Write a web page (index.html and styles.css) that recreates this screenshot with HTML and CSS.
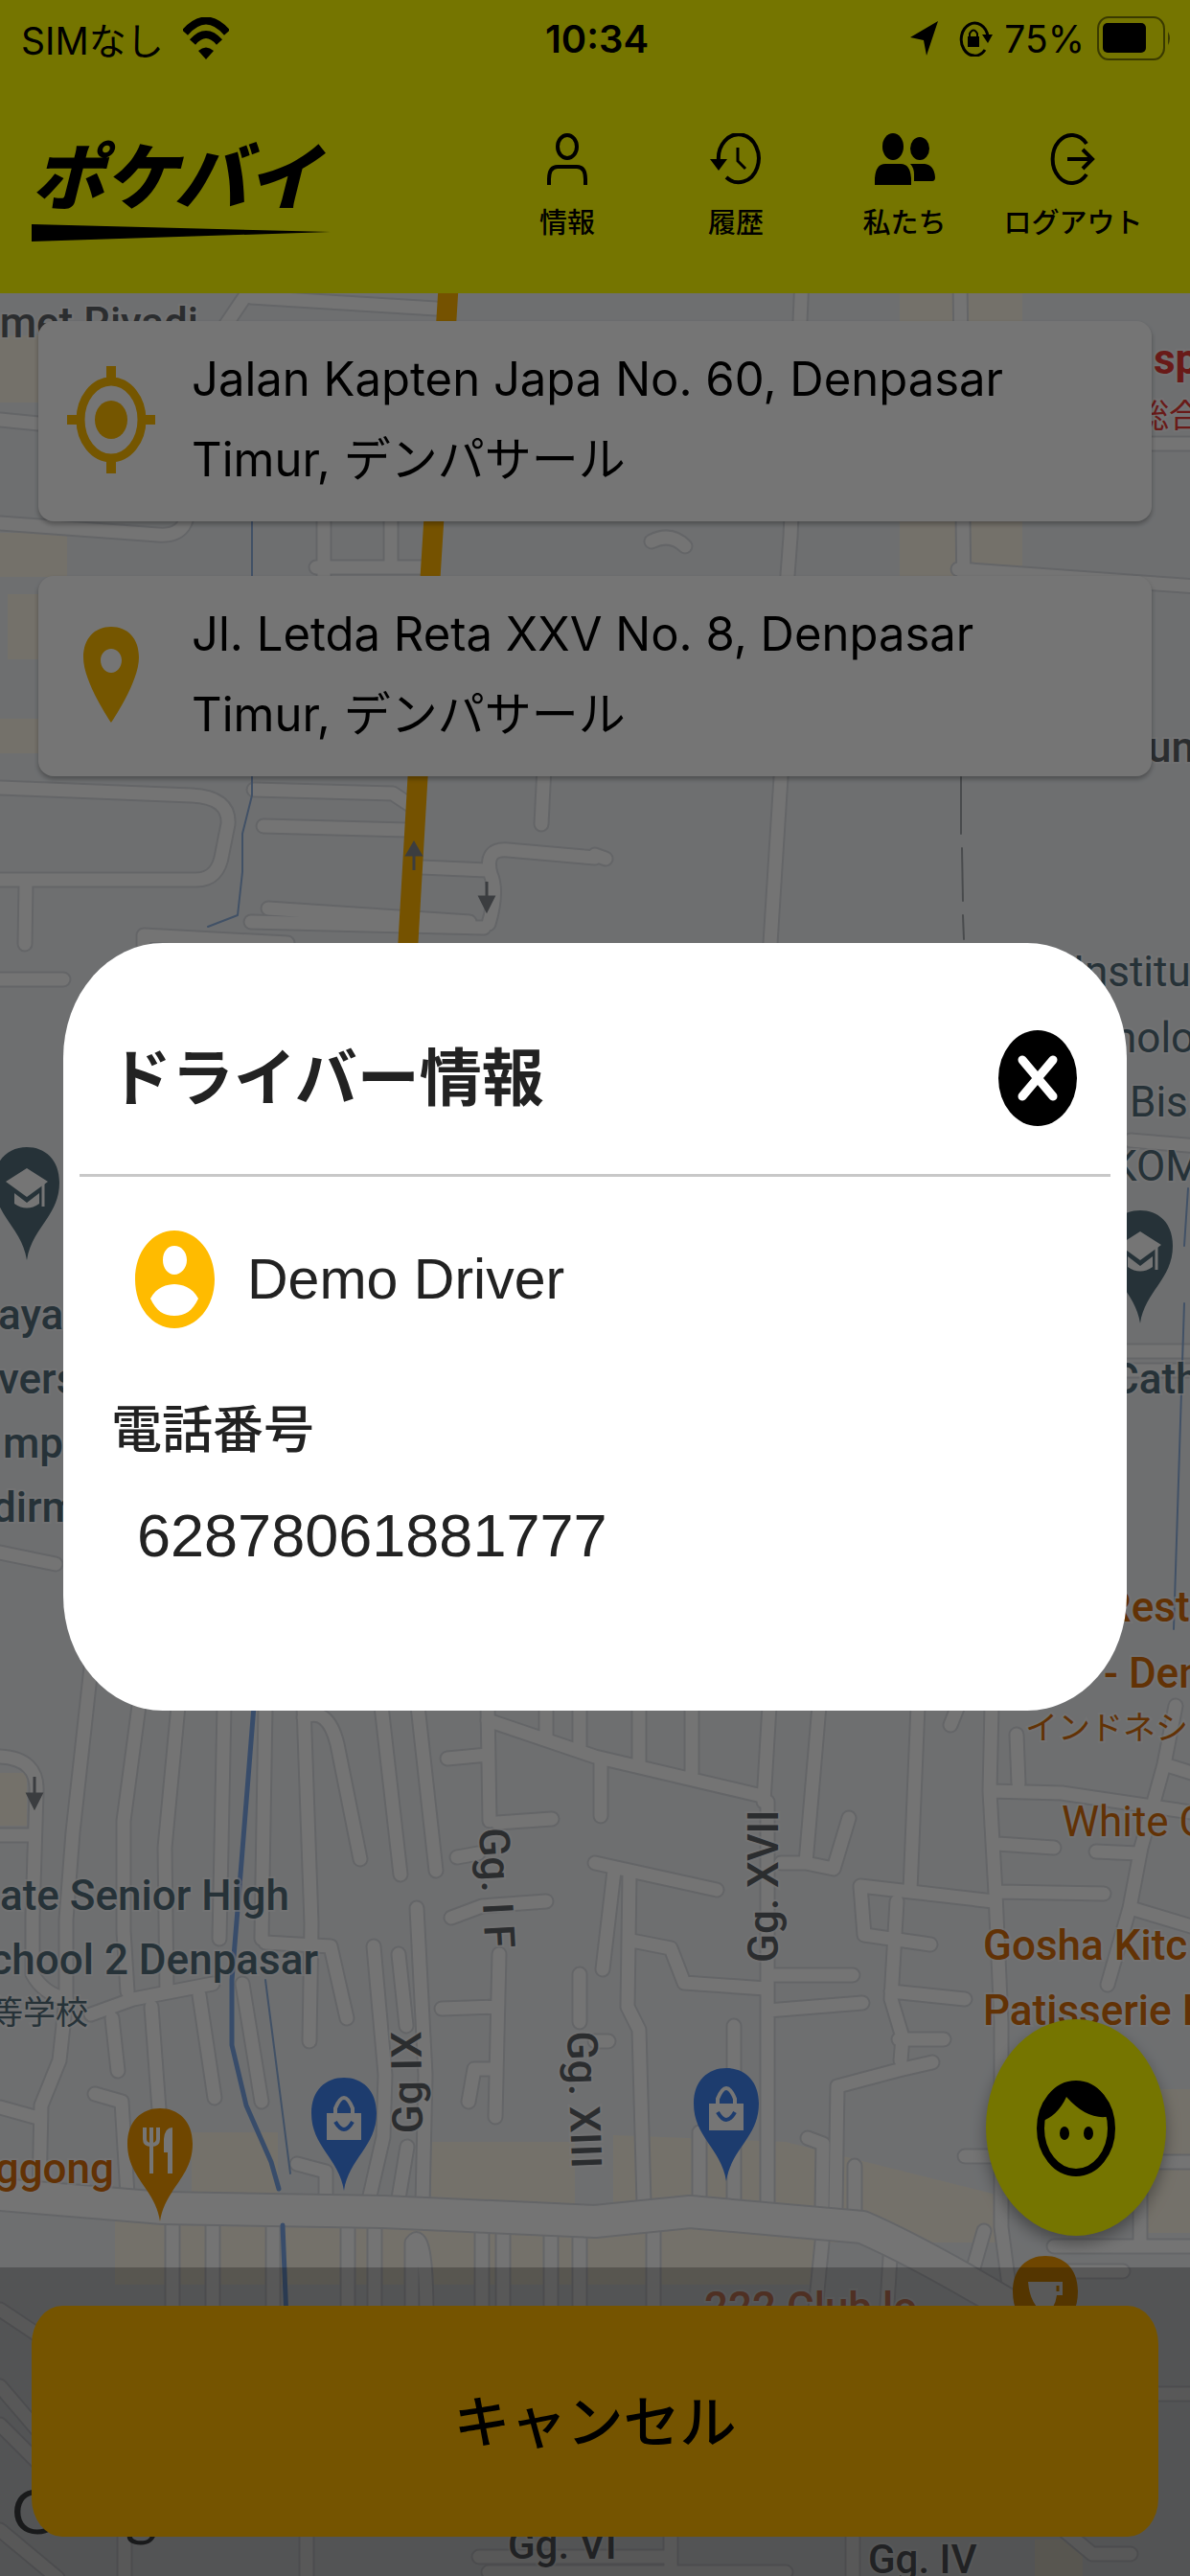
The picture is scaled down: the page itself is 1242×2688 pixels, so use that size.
FILE: index.html
```html
<!DOCTYPE html>
<html lang="ja">
<head>
<meta charset="utf-8">
<meta name="viewport" content="width=device-width, initial-scale=1">
<title>ポケバイ</title>
<link rel="stylesheet" href="styles.css">
</head>
<body>
<div class="app">
  <header class="top">
    <div class="status">
      <div class="status-left">
        <span class="carrier">SIMなし</span>
        <svg class="wifi" viewBox="0 0 48 44" aria-hidden="true"><path d="M2 16Q24-9 46 16M10 26Q24 10 38 26" fill="none" stroke="#000" stroke-width="8"/><path d="M16 35Q24 28 32 35L24 44Z"/></svg>
      </div>
      <time class="clock">10:34</time>
      <div class="status-right">
        <svg class="loc" viewBox="0 0 30 36" aria-hidden="true"><path d="M29 0L17 36L14 20L0 17Z"/></svg>
        <svg class="lock" viewBox="0 0 36 38" aria-hidden="true"><path d="M28 31A14 17 0 1 1 31 17" fill="none" stroke="#000" stroke-width="3"/><path d="M25 15H36L31 24ZM10 17H22V28H10Z"/><path d="M12 18V14Q16 7 20 14V18" fill="none" stroke="#000" stroke-width="2"/></svg>
        <span class="percent">75%</span>
        <svg class="battery" viewBox="0 0 80 48" aria-hidden="true"><rect x="2" y="2" width="69" height="44" rx="11" ry="12" fill="none" stroke="#000" stroke-opacity=".5" stroke-width="2"/><rect x="7" y="8" width="45" height="31" rx="5"/><path d="M75 17Q79 24 75 31Z" fill-opacity=".5"/></svg>
      </div>
    </div>
    <div class="bar">
      <a class="logo" href="#"><span class="logo-text">ポケバイ</span><svg class="swoosh" viewBox="0 0 312 18" preserveAspectRatio="none" aria-hidden="true"><path d="M0 0L312 8L0 18Z"/></svg></a>
      <nav class="nav">
        <button type="button"><svg viewBox="0 0 64 54" aria-hidden="true"><g fill="none" stroke="#000" stroke-width="4"><ellipse cx="32" cy="14" rx="10" ry="12"/><path d="M13 54V48Q13 35 22 35H42Q51 35 51 48V54"/></g></svg><span>情報</span></button>
        <button type="button"><svg viewBox="0 0 64 54" aria-hidden="true"><path d="M14 29A21 25 0 1 1 22 46" fill="none" stroke="#000" stroke-width="4"/><path d="M5 27H23L14 39Z"/><path d="M34 15V29L42 37" fill="none" stroke="#000" stroke-width="3"/></svg><span>履歴</span></button>
        <button type="button"><svg viewBox="0 0 64 54" aria-hidden="true"><ellipse cx="20" cy="14" rx="11" ry="14"/><ellipse cx="48" cy="16" rx="10" ry="12"/><path d="M1 54V47Q2 32 12 32H28Q38 32 39 47V54ZM42 50V43Q42 36 38 32H53Q63 33 64 46Q64 50 61 50Z"/></svg><span>私たち</span></button>
        <button type="button"><svg viewBox="0 0 64 54" aria-hidden="true"><g fill="none" stroke="#000" stroke-width="4"><path d="M46 11A20 25 0 1 0 46 43M26 27H52"/><path d="M42 17L52 27L42 37"/></g></svg><span>ログアウト</span></button>
      </nav>
    </div>
  </header>

  <main class="main">
    <svg class="map" viewBox="0 306 1242 2382" preserveAspectRatio="xMidYMin slice" role="img" aria-label="地図">
      <defs>
        <path id="pin" d="M0 118C-5 84-34 72-34 37C-34 13-19 0 0 0C19 0 34 13 34 37C34 72 5 84 0 118Z"/>
        <g id="bag"><use href="#pin" fill="#4183f0"/><path d="M-18 37H18V65H-18Z" fill="#fff"/><path d="M-9 40V32Q0 10 9 32V40" fill="none" stroke="#fff" stroke-width="4"/><path d="M-9 46Q0 62 9 46" fill="none" stroke="#4183f0" stroke-width="4"/></g>
        <g id="school"><use href="#pin" fill="#546e7a"/><path d="M-22 36L0 22L22 36L0 52ZM-13 48L0 58L13 48V59Q0 68-13 59Z" fill="#fff"/><path d="M17 38V62" stroke="#fff" stroke-width="3"/></g>
        <g id="roads">
          <path d="M0 438L60 444M0 546L165 558Q190 560 195 540M0 822L200 830Q240 832 238 860L232 890Q228 918 205 918L0 918M27 922L26 985"/>
          <path d="M265 824L410 828L428 840M275 862L424 866M280 948L490 962M262 962L505 968M440 905L508 908M621 892L632 896M510 964Q520 930 512 912Q505 885 530 887L621 895M568 800L565 860"/>
          <path d="M235 340L262 300M262 310L455 322M338 530V620M330 592H450M408 530V590M150 1000V976L300 984M0 1022H66"/>
          <path d="M837 290L825 560L822 600L815 811L803 1000M1002 290L1006 620M1000 594L1250 612M1190 463H1250M680 565Q700 555 715 570"/>
          <path d="M1180 1190L1250 1196M1170 1430H1250M1170 1410H1250M0 1620L58 1632"/>
          <path d="M95 1740L76 1912L69 2003L69 2086L62 2150L43 2197L41 2290M145 1780L129 1900V2015L133 2078M186 1780L172 1928L174 2078M234 1780L229 2023M277 1780L273 2023M317 1780L325 2007L323 2130M317 1792Q342 1780 352 1820L376 1940"/>
          <path d="M398 1780L418 1956M436 1780L455 1952M509 1780L511 1900M467 1835L509 1831M519 1902L576 1898M477 1938L499 1934M471 2001L503 1989L570 1984M521 2039L517 2209M461 2096L519 2094M515 2159H495L489 2193"/>
          <path d="M390 2031L402 2165L400 2230L384 2300M416 2039L424 2114M435 1991L444 2165L441 2300M425 2240L415 2300M277 2027L345 2031L362 2106M95 2102L139 2086L222 2070M117 2106L123 2161M158 2094L166 2201M208 2082L224 2189M253 2070L273 2193M99 2185L127 2193L133 2290M0 2199L36 2209M310 2258L340 2266V2300"/>
          <path d="M0 1833Q40 1835 38 1870L34 2000V2060Q45 2080 69 2086M0 1915H36M509 1795L621 1833L791 1873M667 1780V1840M722 1780V1850M803 1780L797 1880M855 1780L841 1944H815M841 1944L870 1950L886 1897M627 1840V1895M570 1780V1812M605 1780V1825"/>
          <path d="M621 1944L748 1972M657 1956L655 2094L667 2118L672 2298M641 1952L629 2055M659 2025L700 2033L714 2069L799 2075M801 1880V2304M801 2061H890M801 2098L900 2090M958 1780L950 1972M898 1968L1037 1984M898 1968L902 2019L971 2029M936 1984L930 2086L942 2126L940 2150M930 2078L1007 2086M938 2128H985M973 2152L938 2160L874 2177L872 2304"/>
          <path d="M1035 1780L1033 1869L1039 1976L1045 2110V2324L1055 2400M1035 1869L1108 1871L1250 1892M1041 1924L1100 1928M1043 1974L1152 1976M1061 1810L1063 1861M1227 1780L1215 1841L1191 1928L1179 1991L1156 2071M1144 1932L1187 1934M1215 1841L1250 1852M1180 1991L1250 2012M1000 1780L992 1800"/>
          <path d="M621 2130H635M605 2060V2110M766 2114V2300M730 2225V2300M843 2231L859 2237L858 2304M892 2260V2312M1007 2250H1040M1027 2328L1015 2370M1190 2256H1250M1100 2344H1250M1190 2256V2344M1095 2370H1172"/>
          <path d="M180 2310V2420M222 2310V2420M285 2310V2420M363 2310V2420M391 2310V2420M430 2420V2340Q445 2320 445 2420M503 2320V2420M525 2320V2420M575 2320V2420M605 2320V2460M682 2320V2420M860 2320L850 2420M930 2340L925 2420M0 2410L60 2450M0 2490L60 2560M0 2530L60 2590M1200 2498H1250M0 2640L60 2690M500 2668H700M510 2684H820M130 2640V2700M320 2640V2700M700 2640V2700M890 2640V2700M1110 2640L1140 2665H1180"/>
        </g>
      </defs>
      <rect class="land" y="300" width="1242" height="2400"/>
      <path class="shops" d="M939 300H1067V620H939ZM0 350H41V420H0ZM0 556H70V602H0ZM8 620H50V688H8ZM0 750H50V786H0ZM0 1850H28V1905H0ZM200 2225H290V2290H200ZM450 2235H600V2310H450ZM640 2228L820 2235L900 2255L1040 2290V2340H640ZM120 2318H420L621 2332L860 2335V2384H120ZM1190 2180H1242V2330H1190ZM1080 2650H1130V2690H1080Z"/>
      <use href="#roads" class="casing"/>
      <use href="#roads" class="street"/>
      <path class="casing-main" d="M0 2290L170 2304L400 2308L621 2318L720 2308L900 2324Q960 2350 1060 2410"/>
      <path class="street-main" d="M0 2290L170 2304L400 2308L621 2318L720 2308L900 2324Q960 2350 1060 2410"/>
      <path class="highway" d="M468 300L436 811L425 1000"/>
      <path class="stream" d="M263 530V830L253 870V910L248 955L217 967M1240 1240L1236 1300M1236 1360L1225 1700M277 2066L303 2268"/>
      <path class="river" d="M265 1780L251 1956L242 2066V2134L257 2197L283 2256L291 2284M295 2322L299 2420"/>
      <path class="border" d="M1003 811V870M1004 885L1005 940M1005 955L1006 980"/>
      <g class="arrows"><path d="M432 908V884M425 892L432 880L439 892Z"/><path d="M508 920V940M501 936L508 950L515 936Z"/><path d="M36 1854V1876M29 1872L36 1886L43 1872Z"/></g>
      <g class="label street-name">
        <text x="-24" y="352">amet Riyadi</text>
        <text x="1198" y="795">ung</text>
        <text transform="translate(500 1908) rotate(87)">Gg. I F</text>
        <text transform="translate(441 2226) rotate(-91)">Gg IX</text>
        <text transform="translate(592 2120) rotate(88)">Gg. XIII</text>
        <text transform="translate(812 2048) rotate(-90)">Gg. XVII</text>
        <text class="small" x="530" y="2670">Gg. VI</text>
        <text class="small" x="906" y="2685">Gg. IV</text>
      </g>
      <g class="label place thin">
        <text x="1120" y="1029">Institu</text>
        <text x="1162" y="1098">nolo</text>
        <text x="1179" y="1165">Bisn</text>
        <text x="1159" y="1232">KOM</text>
      </g>
      <g class="label place">
        <text x="-2" y="1387">aya</text>
        <text x="-2" y="1454">vers</text>
        <text x="3" y="1521">mp</text>
        <text x="-8" y="1588">dirm</text>
        <text x="1160" y="1454">Cath</text>
        <text x="302" y="1993" text-anchor="end">ate Senior High</text>
        <text x="332" y="2060" text-anchor="end">chool 2 Denpasar</text>
        <text class="jp" x="92" y="2112" text-anchor="end">等学校</text>
      </g>
      <g class="label food">
        <text x="1153" y="1692">Rest</text>
        <text x="1152" y="1761">- Den</text>
        <text class="jp" x="1070" y="1815">インドネシ</text>
        <text class="thin" x="1108" y="1916">White C</text>
        <text x="1026" y="2045">Gosha Kitc</text>
        <text x="1026" y="2113">Patisserie I</text>
        <text x="119" y="2278" text-anchor="end">ggong</text>
        <text class="faded" x="735" y="2423">222 Club lo</text>
      </g>
      <g class="label hospital">
        <text x="1204" y="390">sp</text>
        <text class="jp" x="1186" y="446">総合</text>
      </g>
      <use href="#school" x="28" y="1197"/>
      <use href="#school" x="1190" y="1263"/>
      <use href="#bag" x="359" y="2168"/>
      <use href="#bag" x="758" y="2158"/>
      <g transform="translate(167 2200)"><use href="#pin" fill="#f29900"/><path d="M-16 20V32Q-16 38-9 38Q-2 38-2 32V20M-9 20V68" fill="none" stroke="#fff" stroke-width="4"/><path d="M4 46V32Q5 20 13 20V68H8V46Z" fill="#fff"/></g>
      <g transform="translate(1091 2354)"><use href="#pin" fill="#f29900"/><path d="M-18 27H18V41H12Q10 56 0 60Q-16 52-18 27Z" fill="#fff"/><path d="M13 31V37" stroke="#f29900" stroke-width="3"/></g>
      <text class="google" x="12" y="2644">Google</text>
    </svg>

    <section class="route">
      <div class="card">
        <svg viewBox="0 0 92 112" aria-hidden="true"><ellipse cx="46" cy="56" rx="17" ry="20"/><ellipse cx="46" cy="56" rx="32" ry="40" fill="none" stroke="#fb0" stroke-width="9"/><path d="M41 0H51V14H41ZM41 98H51V112H41ZM0 51H12V61H0ZM80 51H92V61H80Z"/></svg>
        <p>Jalan Kapten Japa No. 60, Denpasar Timur, デンパサール</p>
      </div>
      <div class="card">
        <svg viewBox="0 0 92 112" aria-hidden="true"><path fill-rule="evenodd" d="M46 6C63 6 75 18 75 38C75 64 46 106 46 106C46 106 17 64 17 38C17 18 29 6 46 6ZM46 29C40 29 35 34 35 41C35 48 40 54 46 54C52 54 57 48 57 41C57 34 52 29 46 29Z"/></svg>
        <p>Jl. Letda Reta XXV No. 8, Denpasar Timur, デンパサール</p>
      </div>
    </section>

    <button class="fab" type="button" aria-label="ドライバー"><svg viewBox="0 0 82 101" aria-hidden="true"><ellipse cx="41" cy="51" rx="37" ry="46" fill="none" stroke="#000" stroke-width="8"/><path d="M4 44Q8 4 41 2Q73 4 78 38Q54 44 31 18Q22 38 4 44Z"/><ellipse cx="29" cy="56" rx="5" ry="7"/><ellipse cx="54" cy="56" rx="5" ry="7"/></svg></button>

    <footer class="actions"><button class="cancel" type="button">キャンセル</button></footer>
  </main>
</div>

<div class="overlay">
  <section class="dialog" role="dialog" aria-modal="true" aria-labelledby="dialog-title">
    <header class="dialog-head">
      <h1 id="dialog-title">ドライバー情報</h1>
      <button class="close" type="button" aria-label="閉じる"><svg viewBox="0 0 82 100" aria-hidden="true"><ellipse cx="41" cy="50" rx="41" ry="50"/><path d="M25 31L57 69M57 31L25 69" stroke="#fff" stroke-width="9" stroke-linecap="round"/></svg></button>
    </header>
    <div class="dialog-body">
      <div class="driver">
        <svg viewBox="0 0 83 102" aria-hidden="true"><path fill-rule="evenodd" fill="#fb0" d="M41 0C64 0 83 22 83 51C83 80 64 102 41 102C18 102 0 80 0 51C0 22 18 0 41 0ZM41 16C34 16 29 22 29 31C29 39 34 46 41 46C48 46 54 39 54 31C54 22 48 16 41 16ZM16 71C22 84 30 89 41 89C52 89 60 84 66 71C60 59 48 56 41 56C34 56 22 59 16 71Z"/></svg>
        <span>Demo Driver</span>
      </div>
      <dl class="phone"><dt>電話番号</dt><dd>62878061881777</dd></dl>
    </div>
  </section>
</div>
</body>
</html>
```
FILE: styles.css
```css
* { box-sizing: border-box; }
body { margin: 0; font-family: Inter, "Noto Sans CJK JP", sans-serif; color: #000; }
button { margin: 0; padding: 0; border: 0; background: none; color: inherit; font: inherit; }
svg { display: block; flex: none; }
h1, p, dl, dd { margin: 0; }

.app { min-height: 100vh; display: flex; flex-direction: column; }

/* Status bar and navigation */
.top { height: 306px; background: #ff0; }
.status { height: 80px; padding: 0 18px 0 22px; display: grid; grid-template-columns: 1fr auto 1fr; align-items: center; font-size: 39px; }
.status-left, .status-right { display: flex; align-items: center; }
.status-left { gap: 20px; }
.status-right { justify-content: flex-end; gap: 12px; }
.clock { font-size: 40px; font-weight: 600; }
.wifi { width: 48px; height: 44px; }
.loc { width: 30px; height: 36px; margin-right: 8px; }
.lock { width: 36px; height: 38px; }
.battery { width: 80px; height: 48px; }
.bar { padding: 56px 34px 0 33px; display: flex; justify-content: space-between; }
.logo { width: 312px; display: flex; flex-direction: column; color: #000; text-decoration: none; }
.logo-text { font-size: 76px; line-height: 98px; font-weight: 900; font-style: italic; }
.swoosh { width: 312px; height: 18px; }
.nav { display: grid; grid-template-columns: repeat(4, 176px); align-items: start; }
.nav button { margin-top: 3px; display: flex; flex-direction: column; align-items: center; gap: 20px; font-size: 29px; line-height: 40px; font-weight: 500; }
.nav svg { width: 64px; height: 54px; }

/* Map screen */
.main { position: relative; flex: 1; display: flex; flex-direction: column; overflow: hidden; }
.map { position: absolute; inset: 0; width: 100%; height: 100%; font-family: Roboto, "Noto Sans CJK JP", sans-serif; }
.land { fill: #eff2f5; }
.shops { fill: #fdf6e6; }
.casing, .street, .casing-main, .street-main, .highway, .stream, .river, .border { fill: none; stroke-linecap: round; stroke-linejoin: round; }
.casing { stroke: #d9dce1; stroke-width: 17px; }
.street { stroke: #fdfdfd; stroke-width: 13px; }
.casing-main { stroke: #d9dce1; stroke-width: 36px; }
.street-main { stroke: #fdfdfd; stroke-width: 32px; }
.highway { stroke: #ffb300; stroke-width: 21px; }
.stream { stroke: #8fb0de; stroke-width: 2px; }
.river { stroke: #7ba7e8; stroke-width: 5px; }
.border { stroke: #a0a4a8; stroke-width: 2px; }
.arrows { fill: #80868b; stroke: #80868b; stroke-width: 3px; }
.label { font-size: 44px; paint-order: stroke; stroke: #fff; stroke-opacity: .6; stroke-width: 4px; }
.street-name { fill: #5f6368; font-weight: 500; }
.small { font-size: 42px; }
.place { fill: #546e7a; font-weight: 500; }
.food { fill: #d56e0c; font-weight: 500; }
.hospital { fill: #e53935; font-weight: 700; }
.thin { font-weight: 400; }
.jp { font-size: 34px; font-weight: 400; }
.faded { fill: #e28a66; }
.google { font-family: Lato, sans-serif; font-size: 64px; fill: #4a4d50; }

.route { position: relative; padding: 29px 40px 0; display: grid; gap: 57px; }
.card { min-height: 209px; padding: 16px 100px 20px 30px; display: flex; align-items: center; gap: 38px; background: #fff; border-radius: 16px; box-shadow: 0 3px 5px rgba(0, 0, 0, .3); }
.card svg { width: 92px; height: 112px; fill: #fb0; }
.card p { font-size: 49px; line-height: 84px; }

.fab { position: relative; width: 188px; height: 226px; margin: auto 25px 33px auto; display: grid; place-items: center; background: #ff0; border-radius: 50%; box-shadow: 0 8px 16px rgba(0, 0, 0, .35); }
.fab svg { width: 82px; height: 101px; }

.actions { position: relative; padding: 40px 33px 41px; background: rgba(0, 0, 0, .24); }
.cancel { width: 100%; height: 241px; padding-bottom: 6px; background: #ffb700; border-radius: 32px / 40px; font-size: 59px; font-weight: 500; }

/* Driver dialog */
.overlay { position: fixed; inset: 0; padding: 80px 66px 0; display: flex; align-items: center; background: rgba(0, 0, 0, .54); }
.dialog { width: 100%; padding-bottom: 149px; background: #fff; border-radius: 104px / 120px; color: #222; }
.dialog-head { margin: 0 17px; padding: 91px 35px 50px 31px; display: flex; justify-content: space-between; align-items: center; border-bottom: 3px solid #c8c8c8; }
.dialog-head h1 { font-size: 65px; line-height: 80px; font-weight: 700; }
.close svg { width: 82px; height: 100px; fill: #000; }
.dialog-body { padding: 56px 50px 0; font-family: "Liberation Sans", "Noto Sans CJK JP", sans-serif; }
.driver { padding-left: 25px; display: flex; align-items: center; gap: 34px; font-size: 59px; }
.driver svg { width: 83px; height: 102px; }
.phone { margin-top: 75px; }
.phone dt { font-size: 53px; line-height: 64px; font-weight: 500; }
.phone dd { margin-top: 43px; padding-left: 27px; font-size: 63px; line-height: 68px; }
```
